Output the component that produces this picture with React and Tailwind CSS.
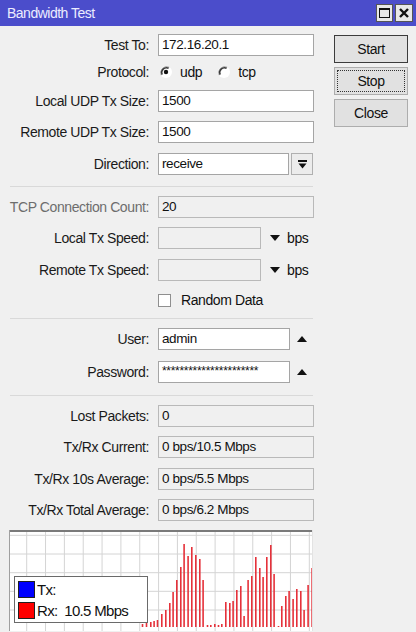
import React from "react";

const FONT = { fontFamily: '"Liberation Sans", Arial, sans-serif' };

// bar positions (px, relative to graph left) and heights
const BARS = [
  [132.7, 3], [136.7, 5],
  [141, 5], [144.3, 6], [147.7, 7], [152, 13], [156, 17], [160, 24], [163.3, 35],
  [167, 47], [171, 60], [174.3, 83], [178.3, 71], [182, 80], [186, 72], [190, 68],
  [193.3, 47], [197.7, 2], [201, 2], [205, 3], [208.7, 2], [212, 3], [216, 25],
  [220, 24], [223.3, 26], [227, 37], [231, 41], [234.3, 11], [238.3, 47], [242, 51],
  [246, 70], [250, 59], [253.3, 50], [257, 70], [261, 82], [264.3, 53], [268.7, 1],
  [272, 21], [276, 31], [279.3, 36], [283.3, 28], [287, 38], [291, 36], [294.3, 17],
  [298.3, 42], [302.3, 59],
];

function Label({ children, disabled }) {
  return (
    <span
      className={`w-[149px] shrink-0 text-right text-[14px] tracking-[-0.4px] leading-none whitespace-nowrap ${
        disabled ? "text-[#6d6d6d]" : "text-[#1a1a1a]"
      }`}
    >
      {children}
    </span>
  );
}

function Field({ value, width = "w-[156px]", kind = "edit" }) {
  const look =
    kind === "edit"
      ? "bg-white border-[#a5a5a5]"
      : "bg-[#f0f0f0] border-[#b9b9b9]";
  return (
    <div
      className={`${width} ml-[9px] h-[22px] border ${look} flex items-center pl-[3px] text-[13.5px] tracking-[-0.4px] text-[#111] leading-none overflow-hidden`}
    >
      {value}
    </div>
  );
}

function Row({ label, disabled, className = "", children }) {
  return (
    <div className={`flex items-center h-[22px] ${className}`}>
      <Label disabled={disabled}>{label}</Label>
      {children}
    </div>
  );
}

function Sep({ className = "" }) {
  return <div className={`ml-[10px] w-[303px] h-px bg-[#d9d9d9] ${className}`} />;
}

function Radio({ checked }) {
  return (
    <svg width="14" height="14" viewBox="0 0 14 14">
      <circle cx="7" cy="7" r="6" fill="#fff" />
      <path d="M2.2 10.2 A6 6 0 0 1 10.2 2.2" fill="none" stroke="#a0a0a0" strokeWidth="1" />
      <path d="M3.2 9.6 A4.8 4.8 0 0 1 9.6 3.2" fill="none" stroke="#3a3a3a" strokeWidth="1.5" />
      {checked && <circle cx="7" cy="7" r="2.2" fill="#111" />}
    </svg>
  );
}

function TriDown() {
  return (
    <svg width="10" height="6" viewBox="0 0 10 6" className="shrink-0">
      <path d="M0 0 H10 L5 6 Z" fill="#111" />
    </svg>
  );
}

function TriUp() {
  return (
    <svg width="10" height="6" viewBox="0 0 10 6" className="shrink-0">
      <path d="M0 6 H10 L5 0 Z" fill="#111" />
    </svg>
  );
}

function Btn({ children, variant }) {
  const border =
    variant === "default" ? "border-[#3c3c3c]" : "border-[#adadad]";
  return (
    <div
      className={`w-[74px] h-[28px] border ${border} bg-[#e1e1e1] flex items-center justify-center text-[14px] tracking-[-0.4px] text-[#111] p-[2px]`}
    >
      <div
        className={`w-full h-full flex items-center justify-center ${
          variant === "focus" ? "border border-dotted border-[#333]" : ""
        }`}
      >
        {children}
      </div>
    </div>
  );
}

function Graph() {
  const vlines = Array.from({ length: 16 }, (_, k) => 17.7 + k * 18.84);
  const hlines = [5.3, 24, 42.7, 61.3, 80];
  return (
    <div className="ml-[9px] mt-[9px] relative w-[304px] h-[101px]">
      <svg width="304" height="101" viewBox="0 0 304 101" className="block">
        <rect x="0" y="0" width="304" height="101" fill="#fff" />
        {vlines.map((x) => (
          <line key={x} x1={x} y1="0" x2={x} y2="101" stroke="#d4d4d4" strokeWidth="1" />
        ))}
        {hlines.map((y) => (
          <line key={y} x1="0" y1={y} x2="304" y2={y} stroke="#d4d4d4" strokeWidth="1" />
        ))}
        {BARS.map(([x, h]) => (
          <rect key={x} x={x} y={97 - h} width="1.6" height={h} fill="#e5313a" />
        ))}
        <rect x="0" y="0" width="304" height="2" fill="#7a7a7a" />
        <rect x="0" y="0" width="1" height="101" fill="#a0a0a0" />
        <rect x="303" y="0" width="1" height="101" fill="#e3e3e3" />
      </svg>
      <div className="absolute left-[5px] top-[46px] w-[134px] h-[47px] bg-white border border-[#6a6a6a] flex flex-col justify-center gap-[4px] pl-[3px]">
        <div className="flex items-center h-[17px]">
          <span className="w-[17px] h-[17px] bg-[#0000ff] border border-[#202020]" />
          <span className="ml-[2px] text-[15px] tracking-[-0.7px] text-[#111] leading-none">Tx:</span>
        </div>
        <div className="flex items-center h-[17px]">
          <span className="w-[17px] h-[17px] bg-[#ff0000] border border-[#202020]" />
          <span className="ml-[2px] text-[15px] tracking-[-0.7px] text-[#111] leading-none whitespace-pre">
            {"Rx:  10.5 Mbps"}
          </span>
        </div>
      </div>
    </div>
  );
}

export default function App() {
  return (
    <div className="w-[416px] h-[632px] bg-[#f0f0f0] overflow-hidden" style={FONT}>
      {/* title bar */}
      <div className="h-[26px] bg-[#4b4dcb] flex items-center pl-[7px] pr-[3px]">
        <span className="text-[14px] tracking-[-0.5px] text-[#ececff] leading-none">Bandwidth Test</span>
        <div className="ml-auto flex gap-[2px]">
          <div className="w-[17px] h-[18px] bg-[#e8e8e8] border border-[#555] flex items-center justify-center">
            <div className="w-[11px] h-[10px] border-[1.5px] border-[#111] border-t-[2.5px]" />
          </div>
          <div className="w-[18px] h-[18px] bg-[#e8e8e8] border border-[#555] flex items-center justify-center">
            <svg width="10" height="10" viewBox="0 0 10 10">
              <path d="M1 1 L9 9 M9 1 L1 9" stroke="#111" strokeWidth="2.4" />
            </svg>
          </div>
        </div>
      </div>

      <div className="flex">
        <div className="w-[320px]">
          <Row label="Test To:" className="mt-[8px]">
            <Field value="172.16.20.1" />
          </Row>
          <Row label="Protocol:" className="mt-[5px]">
            <div className="ml-[10px] flex items-center text-[14px] tracking-[-0.4px] text-[#111]">
              <Radio checked />
              <span className="ml-[7px]">udp</span>
              <span className="ml-[15px] flex"><Radio /></span>
              <span className="ml-[7px]">tcp</span>
            </div>
          </Row>
          <Row label="Local UDP Tx Size:" className="mt-[7px]">
            <Field value="1500" />
          </Row>
          <Row label="Remote UDP Tx Size:" className="mt-[9px]">
            <Field value="1500" />
          </Row>
          <Row label="Direction:" className="mt-[10px]">
            <Field value="receive" width="w-[131px]" />
            <div className="ml-[2px] w-[22px] h-[22px] border border-[#b0b0b0] bg-[#ececec] flex items-center justify-center">
              <svg width="9" height="9" viewBox="0 0 9 9">
                <rect x="0" y="0" width="9" height="2" fill="#111" />
                <path d="M0.5 3.5 H8.5 L4.5 8.5 Z" fill="#111" />
              </svg>
            </div>
          </Row>
          <Sep className="mt-[11px]" />
          <Row label="TCP Connection Count:" disabled className="mt-[9px]">
            <Field value="20" kind="ro" />
          </Row>
          <Row label="Local Tx Speed:" className="mt-[9px]">
            <Field value="" kind="ro" width="w-[103px]" />
            <span className="ml-[9px] flex"><TriDown /></span>
            <span className="ml-[7px] text-[14px] tracking-[-0.4px] text-[#111]">bps</span>
          </Row>
          <Row label="Remote Tx Speed:" className="mt-[10px]">
            <Field value="" kind="ro" width="w-[103px]" />
            <span className="ml-[9px] flex"><TriDown /></span>
            <span className="ml-[7px] text-[14px] tracking-[-0.4px] text-[#111]">bps</span>
          </Row>
          <div className="flex items-center h-[14px] mt-[12px]">
            <div className="ml-[158px] w-[13px] h-[13px] bg-white border border-[#8f8f8f]" />
            <span className="ml-[10px] text-[14px] tracking-[-0.4px] text-[#111]">Random Data</span>
          </div>
          <Sep className="mt-[11px]" />
          <Row label="User:" className="mt-[9px]">
            <Field value="admin" width="w-[132px]" />
            <span className="ml-[7px] flex"><TriUp /></span>
          </Row>
          <Row label="Password:" className="mt-[11px]">
            <Field
              value={<span className="text-[12px] tracking-[-0.3px] -mt-[3px]">{"*".repeat(22)}</span>}
              width="w-[132px]"
            />
            <span className="ml-[7px] flex"><TriUp /></span>
          </Row>
          <Sep className="mt-[12px]" />
          <Row label="Lost Packets:" className="mt-[9px]">
            <Field value="0" kind="ro" />
          </Row>
          <Row label="Tx/Rx Current:" className="mt-[9px]">
            <Field value="0 bps/10.5 Mbps" kind="ro" />
          </Row>
          <Row label="Tx/Rx 10s Average:" className="mt-[10px]">
            <Field value="0 bps/5.5 Mbps" kind="ro" />
          </Row>
          <Row label="Tx/Rx Total Average:" className="mt-[9px]">
            <Field value="0 bps/6.2 Mbps" kind="ro" />
          </Row>
          <Graph />
        </div>

        <div className="ml-[14px] mt-[9px] flex flex-col gap-[4px]">
          <Btn variant="default">Start</Btn>
          <Btn variant="focus">Stop</Btn>
          <Btn>Close</Btn>
        </div>
      </div>
    </div>
  );
}
